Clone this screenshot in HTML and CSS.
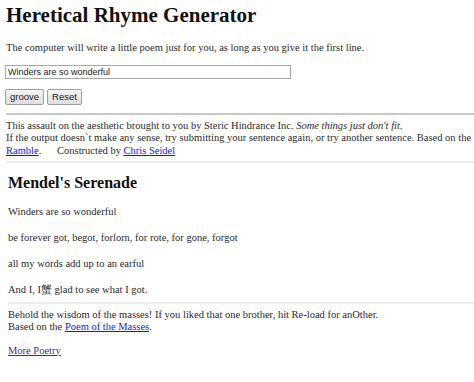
FILE: index.html
```html
<!DOCTYPE html>
<html>
<head>
<meta charset="utf-8">
<link rel="stylesheet" href="styles.css">
</head>
<body>
<div class="page">
<h1 class="title">Heretical Rhyme Generator</h1>
<p class="intro">The computer will write a little poem just for you, as long as you give it the first line.</p>
<form class="form">
<input class="line-input" type="text" value="Winders are so wonderful">
<div class="buttons">
<button class="btn" type="button">groove</button>
<button class="btn" type="reset">Reset</button>
</div>
</form>
<hr class="rule">
<div class="credits">This assault on the aesthetic brought to you by Steric Hindrance Inc. <i>Some things just don't fit.</i><br>If the output doesn`t make any sense, try submitting your sentence again, or try another sentence. Based on the<br><a href="#">Ramble</a>.&nbsp;&nbsp;&nbsp;&nbsp;&nbsp; Constructed by <a href="#">Chris Seidel</a></div>
<hr class="rule light">
<div class="result">
<h2 class="poem-title">Mendel's Serenade</h2>
<p class="verse">Winders are so wonderful</p>
<p class="verse">be forever got, begot, forlorn, for rote, for gone, forgot</p>
<p class="verse">all my words add up to an earful</p>
<p class="verse last">And I, I蟹 glad to see what I got.</p>
<hr class="rule light">
<div class="masses">Behold the wisdom of the masses! If you liked that one brother, hit Re-load for anOther.<br>Based on the <a href="#">Poem of the Masses</a>.</div>
<p class="more"><a class="visited" href="#">More Poetry</a></p>
</div>
</div>
</body>
</html>
```
FILE: styles.css
```css
html, body {
  margin: 0;
  padding: 0;
  background: #fff;
  overflow: hidden;
}
body {
  width: 474px;
  height: 382px;
}
.page {
  width: 620px;
  padding: 0 6px;
  font-family: "Liberation Serif", "Times New Roman", serif;
  font-size: 10.5px;
  line-height: 12.5px;
  color: #2a2a2a;
}
.title {
  font-size: 21px;
  line-height: 24px;
  margin: 3px 0 15px;
  color: #111;
}
.intro {
  margin: 0 0 10px;
}
.form {
  margin: 0;
}
.line-input {
  display: block;
  box-sizing: border-box;
  width: 286px;
  height: 14px;
  margin: 0 0 0 -1px;
  padding: 0 2px;
  border: 1px solid #a8a8a8;
  font-family: "Liberation Sans", Arial, sans-serif;
  font-size: 9px;
  color: #222;
  background: #fff;
}
.buttons {
  display: flex;
  gap: 3px;
  margin: 10px 0 0 -1px;
}
.btn {
  height: 16px;
  padding: 0 4px;
  border: 1px solid #a0a0a0;
  border-radius: 2px;
  background: linear-gradient(#f4f4f4, #dedede);
  font-family: "Liberation Sans", Arial, sans-serif;
  font-size: 9.5px;
  color: #222;
}
.rule {
  border: 0;
  border-top: 2px solid #c8c8c8;
  margin: 8px -10px 5px 0;
}
.rule.light {
  border-top: 2px solid #ececec;
  margin-top: 4px;
}
.credits {
  margin: 0;
}
a {
  color: #1a1ad0;
}
a.visited {
  color: #55287a;
}
.result {
  padding-left: 2px;
}
.poem-title {
  font-size: 16px;
  line-height: 20px;
  margin: 10px 0 13px;
  color: #111;
}
.verse {
  margin: 0 0 13.5px;
}
.verse.last {
  margin-bottom: 0;
}
.result .rule {
  margin: 5px -10px 5px 0;
}
.masses {
  margin: 0;
}
.more {
  margin: 11px 0 0;
}
```
